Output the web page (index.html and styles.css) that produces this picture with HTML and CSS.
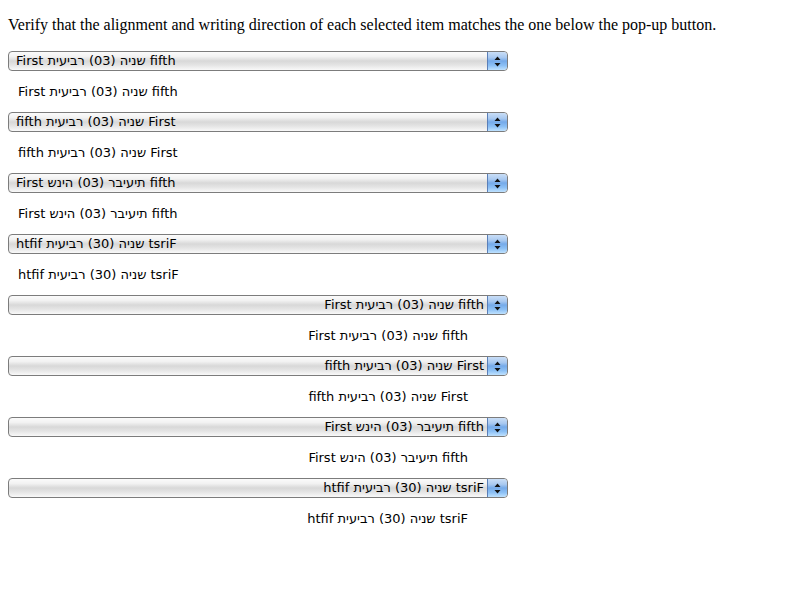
FILE: index.html
```html
<!DOCTYPE html>
<html>
<head>
<meta charset="utf-8">
<link rel="stylesheet" href="styles.css">
</head>
<body>
<p class="intro">Verify that the alignment and writing direction of each selected item matches the one below the pop-up button.</p>

<div class="group">
  <div class="popup"><span class="label"><span class="nat">First שניה (03) רביעית fifth</span></span><span class="btn"><svg width="7" height="11" viewBox="0 0 7 11"><path d="M3.5 0.5 L6.5 4 L0.5 4 Z M0.5 7 L6.5 7 L3.5 10.5 Z" fill="#111"/></svg></span></div>
  <div class="sample"><span class="nat">First שניה (03) רביעית fifth</span></div>

  <div class="popup"><span class="label"><span class="rtl">First שניה (03) רביעית fifth</span></span><span class="btn"><svg width="7" height="11" viewBox="0 0 7 11"><path d="M3.5 0.5 L6.5 4 L0.5 4 Z M0.5 7 L6.5 7 L3.5 10.5 Z" fill="#111"/></svg></span></div>
  <div class="sample"><span class="rtl">First שניה (03) רביעית fifth</span></div>

  <div class="popup"><span class="label"><span class="ovl">First שניה (03) רביעית fifth</span></span><span class="btn"><svg width="7" height="11" viewBox="0 0 7 11"><path d="M3.5 0.5 L6.5 4 L0.5 4 Z M0.5 7 L6.5 7 L3.5 10.5 Z" fill="#111"/></svg></span></div>
  <div class="sample"><span class="ovl">First שניה (03) רביעית fifth</span></div>

  <div class="popup"><span class="label"><span class="ovr">First שניה (03) רביעית fifth</span></span><span class="btn"><svg width="7" height="11" viewBox="0 0 7 11"><path d="M3.5 0.5 L6.5 4 L0.5 4 Z M0.5 7 L6.5 7 L3.5 10.5 Z" fill="#111"/></svg></span></div>
  <div class="sample"><span class="ovr">First שניה (03) רביעית fifth</span></div>
</div>

<div class="group right">
  <div class="popup"><span class="label"><span class="nat">First שניה (03) רביעית fifth</span></span><span class="btn"><svg width="7" height="11" viewBox="0 0 7 11"><path d="M3.5 0.5 L6.5 4 L0.5 4 Z M0.5 7 L6.5 7 L3.5 10.5 Z" fill="#111"/></svg></span></div>
  <div class="sample"><span class="nat">First שניה (03) רביעית fifth</span></div>

  <div class="popup"><span class="label"><span class="rtl">First שניה (03) רביעית fifth</span></span><span class="btn"><svg width="7" height="11" viewBox="0 0 7 11"><path d="M3.5 0.5 L6.5 4 L0.5 4 Z M0.5 7 L6.5 7 L3.5 10.5 Z" fill="#111"/></svg></span></div>
  <div class="sample"><span class="rtl">First שניה (03) רביעית fifth</span></div>

  <div class="popup"><span class="label"><span class="ovl">First שניה (03) רביעית fifth</span></span><span class="btn"><svg width="7" height="11" viewBox="0 0 7 11"><path d="M3.5 0.5 L6.5 4 L0.5 4 Z M0.5 7 L6.5 7 L3.5 10.5 Z" fill="#111"/></svg></span></div>
  <div class="sample"><span class="ovl">First שניה (03) רביעית fifth</span></div>

  <div class="popup"><span class="label"><span class="ovr">First שניה (03) רביעית fifth</span></span><span class="btn"><svg width="7" height="11" viewBox="0 0 7 11"><path d="M3.5 0.5 L6.5 4 L0.5 4 Z M0.5 7 L6.5 7 L3.5 10.5 Z" fill="#111"/></svg></span></div>
  <div class="sample"><span class="ovr">First שניה (03) רביעית fifth</span></div>
</div>
</body>
</html>
```

FILE: styles.css
```css
html, body {
  background: #fff;
}
body {
  margin: 0;
  padding: 16px 8px 8px;
  font-family: "Liberation Serif", serif;
  font-size: 16px;
  color: #000;
}
.intro {
  margin: 0 0 17px;
  line-height: 18px;
}
.group {
  width: 500px;
  font-family: "DejaVu Sans", "Noto Sans", sans-serif;
  font-size: 13px;
  color: #000;
}
.popup {
  display: flex;
  align-items: stretch;
  height: 20px;
  box-sizing: border-box;
  border: 1px solid #7c7c7c;
  border-radius: 4px;
  background: linear-gradient(#fbfbfb 0%, #f2f2f2 25%, #d8d8d8 50%, #e4e4e4 72%, #f9f9f9 100%);
  overflow: hidden;
}
.label {
  flex: 1;
  padding: 0 0 0 7px;
  line-height: 18px;
  white-space: nowrap;
  overflow: hidden;
}
.right .label {
  text-align: right;
  padding: 0 3px 0 0;
}
.btn {
  width: 19px;
  display: flex;
  align-items: center;
  justify-content: center;
  border-left: 1px solid #5a7fb8;
  background: linear-gradient(#c9def7 0%, #a9c9f0 30%, #75aae9 50%, #8cc0f5 75%, #bfe2ff 100%);
  border-radius: 0 3px 3px 0;
}
.sample {
  margin: 10px 0;
  height: 21px;
  line-height: 21px;
  padding: 0 10px;
  white-space: nowrap;
}
.right .sample {
  text-align: right;
  padding: 0 40px 0 10px;
}
.nat {
  unicode-bidi: isolate;
  direction: ltr;
}
.rtl {
  unicode-bidi: isolate;
  direction: rtl;
}
.ovl {
  unicode-bidi: bidi-override;
  direction: ltr;
}
.ovr {
  unicode-bidi: bidi-override;
  direction: rtl;
}
```
